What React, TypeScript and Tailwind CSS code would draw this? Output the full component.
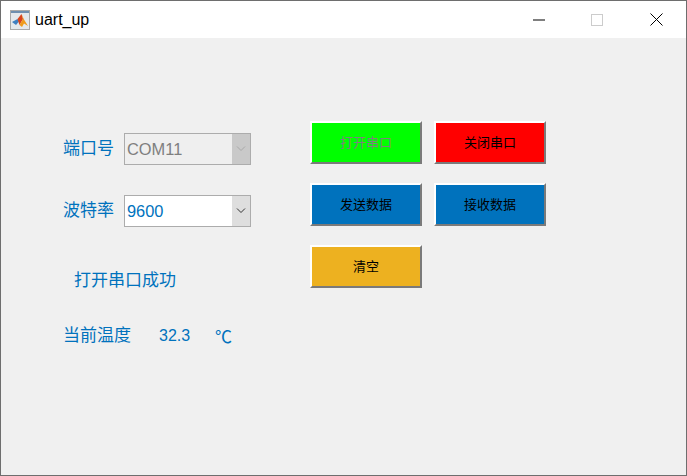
import React from "react";

const cjk = "font-['Liberation_Sans','Noto_Sans_CJK_SC',sans-serif]";

function Btn({ label, bg, text = "text-black" }: { label: string; bg: string; text?: string }) {
  return (
    <div className={`flex h-[43px] w-[112px] items-center justify-center border-2 border-t-white border-l-white border-r-[#7a7a7a] border-b-[#7a7a7a] text-[13px] ${bg} ${text}`}>
      {label}
    </div>
  );
}

function Select({ value, disabled }: { value: string; disabled?: boolean }) {
  return (
    <div className={`flex h-[32px] w-[127px] border border-[#acacac] ${disabled ? "bg-[#efefef] text-[#7f7f7f]" : "bg-white text-[#0072bd]"}`}>
      <div className="flex-1 pl-[2px] text-[16.4px] leading-[30px]">{value}</div>
      <div className={`flex w-[18px] items-center justify-center ${disabled ? "bg-[#c9c9c9]" : "bg-[#dedede]"}`}>
        <svg width="10" height="6" viewBox="0 0 10 6" fill="none" stroke={disabled ? "#a8a8a8" : "#333"} strokeWidth="1">
          <path d="M1 0.5 L5 4.5 L9 0.5" />
        </svg>
      </div>
    </div>
  );
}

export default function App() {
  return (
    <div className={`flex h-[476px] w-[687px] flex-col overflow-hidden border border-[#6e6e6e] bg-[#f0f0f0] ${cjk}`}>
      <div className="flex h-[37px] shrink-0 items-center bg-white pl-[9px]">
        <svg width="20" height="20" viewBox="0 0 20 20" className="shrink-0">
          <rect x="0.5" y="0.5" width="19" height="19" fill="#e4e8ec" stroke="#a9a9a9" />
          <rect x="1" y="1" width="18" height="2" fill="#6f8fb0" />
          <path d="M2 12 L7.5 9 L9 11.5 L6 15 Z" fill="#3f7fc0" />
          <path d="M7.5 9 L11.5 4 L13 9 L9.5 15 Z" fill="#d9441e" />
          <path d="M11.5 4 L14 9.5 L18 16 L14 13.5 L12 17 L9.5 15 L13 9 Z" fill="#f09a1a" />
        </svg>
        <span className="ml-[5px] text-[16px] leading-none text-black">uart_up</span>
        <div className="ml-auto flex items-center">
          <svg width="12" height="2" viewBox="0 0 12 2" className="mr-[46px]"><rect width="12" height="1" y="0.5" fill="#000" /></svg>
          <svg width="12" height="12" viewBox="0 0 12 12" className="mr-[47px]" fill="none"><rect x="0.5" y="0.5" width="11" height="11" stroke="#cccccc" /></svg>
          <svg width="13" height="13" viewBox="0 0 13 13" className="mr-[23px]" fill="none" stroke="#000"><path d="M0.5 0.5 L12.5 12.5 M12.5 0.5 L0.5 12.5" /></svg>
        </div>
      </div>

      <div className="flex flex-1 pt-[83px] pl-[62px] text-[#0072bd]">
        <div className="flex w-[247px] shrink-0 flex-col pt-[12px]">
          <div className="flex items-center">
            <span className="w-[61px] text-[17px]">端口号</span>
            <Select value="COM11" disabled />
          </div>
          <div className="mt-[30px] flex items-center">
            <span className="w-[61px] text-[17px]">波特率</span>
            <Select value="9600" />
          </div>
          <div className="mt-[42px] pl-[11px] text-[17px] leading-[24px]">打开串口成功</div>
          <div className="mt-[31px] flex items-center leading-[24px]">
            <span className="w-[96px] text-[17px]">当前温度</span>
            <span className="w-[56px] text-[16px]">32.3</span>
            <span className="font-['Noto_Sans_CJK_SC',sans-serif] text-[17px]">℃</span>
          </div>
        </div>
        <div className="grid grid-cols-[112px_112px] gap-x-[12px] gap-y-[19px] self-start">
          <Btn label="打开串口" bg="bg-[#00ff00]" text="text-[#7f7f7f]" />
          <Btn label="关闭串口" bg="bg-[#ff0000]" />
          <Btn label="发送数据" bg="bg-[#0072bd]" />
          <Btn label="接收数据" bg="bg-[#0072bd]" />
          <Btn label="清空" bg="bg-[#edb120]" />
        </div>
      </div>
    </div>
  );
}
